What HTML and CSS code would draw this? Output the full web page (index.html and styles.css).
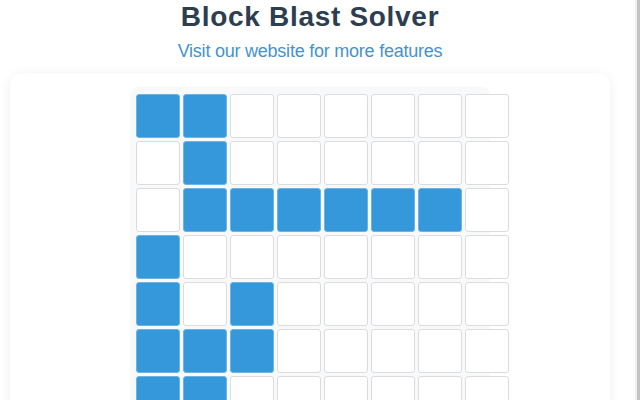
FILE: index.html
```html
<!DOCTYPE html>
<html>
<head>
<meta charset="utf-8">
<link rel="stylesheet" href="styles.css">
</head>
<body>
<div class="frame">
  <div class="main">
    <h1 class="title">Block Blast Solver</h1>
    <a class="subtitle" href="#">Visit our website for more features</a>
    <div class="card">
      <div class="board">
        <div class="grid">
          <div class="cell on"></div><div class="cell on"></div><div class="cell"></div><div class="cell"></div><div class="cell"></div><div class="cell"></div><div class="cell"></div><div class="cell"></div>
          <div class="cell"></div><div class="cell on"></div><div class="cell"></div><div class="cell"></div><div class="cell"></div><div class="cell"></div><div class="cell"></div><div class="cell"></div>
          <div class="cell"></div><div class="cell on"></div><div class="cell on"></div><div class="cell on"></div><div class="cell on"></div><div class="cell on"></div><div class="cell on"></div><div class="cell"></div>
          <div class="cell on"></div><div class="cell"></div><div class="cell"></div><div class="cell"></div><div class="cell"></div><div class="cell"></div><div class="cell"></div><div class="cell"></div>
          <div class="cell on"></div><div class="cell"></div><div class="cell on"></div><div class="cell"></div><div class="cell"></div><div class="cell"></div><div class="cell"></div><div class="cell"></div>
          <div class="cell on"></div><div class="cell on"></div><div class="cell on"></div><div class="cell"></div><div class="cell"></div><div class="cell"></div><div class="cell"></div><div class="cell"></div>
          <div class="cell on"></div><div class="cell on"></div><div class="cell"></div><div class="cell"></div><div class="cell"></div><div class="cell"></div><div class="cell"></div><div class="cell"></div>
          <div class="cell"></div><div class="cell"></div><div class="cell"></div><div class="cell"></div><div class="cell"></div><div class="cell"></div><div class="cell"></div><div class="cell"></div>
        </div>
      </div>
    </div>
  </div>
  <div class="edge-light"></div>
  <div class="edge-dark"></div>
</div>
</body>
</html>
```
FILE: styles.css
```css
html, body {
  margin: 0;
  padding: 0;
  background: #ffffff;
  overflow: hidden;
}
body {
  font-family: "Liberation Sans", Arial, sans-serif;
}
.frame {
  display: flex;
  width: 640px;
  height: 400px;
  overflow: hidden;
}
.main {
  width: 600px;
  flex: none;
  padding: 0 10px;
  display: flex;
  flex-direction: column;
  align-items: center;
}
.edge-light {
  width: 15px;
  flex: none;
  background: #ffffff;
}
.edge-dark {
  width: 3px;
  flex: none;
  background: #c3c3c3;
  border-left: 2px solid #f1f1f1;
}
.title {
  margin: 0;
  font-size: 28px;
  line-height: 34px;
  font-weight: bold;
  letter-spacing: 0.7px;
  color: #2c3e50;
}
.subtitle {
  margin-top: 6px;
  font-size: 18px;
  line-height: 22px;
  letter-spacing: -0.23px;
  color: #4592d0;
  text-decoration: none;
}
.card {
  margin-top: 11px;
  width: 600px;
  height: 400px;
  background: #ffffff;
  border-radius: 12px;
  box-shadow: 0 2px 12px rgba(0, 0, 0, 0.07);
  padding-top: 14px;
  box-sizing: border-box;
  display: flex;
  justify-content: center;
}
.board {
  width: 360px;
  height: 420px;
  background: #f8f9fa;
  border-radius: 8px;
  padding: 7px 6px;
  box-sizing: border-box;
}
.grid {
  display: grid;
  grid-template-columns: repeat(8, 44px);
  grid-auto-rows: 44px;
  gap: 3px;
}
.cell {
  box-sizing: border-box;
  background: #ffffff;
  border: 1px solid #dcdcdc;
  border-radius: 3px;
}
.cell.on {
  background: #3498db;
  border-color: #6db3e4;
}
```
